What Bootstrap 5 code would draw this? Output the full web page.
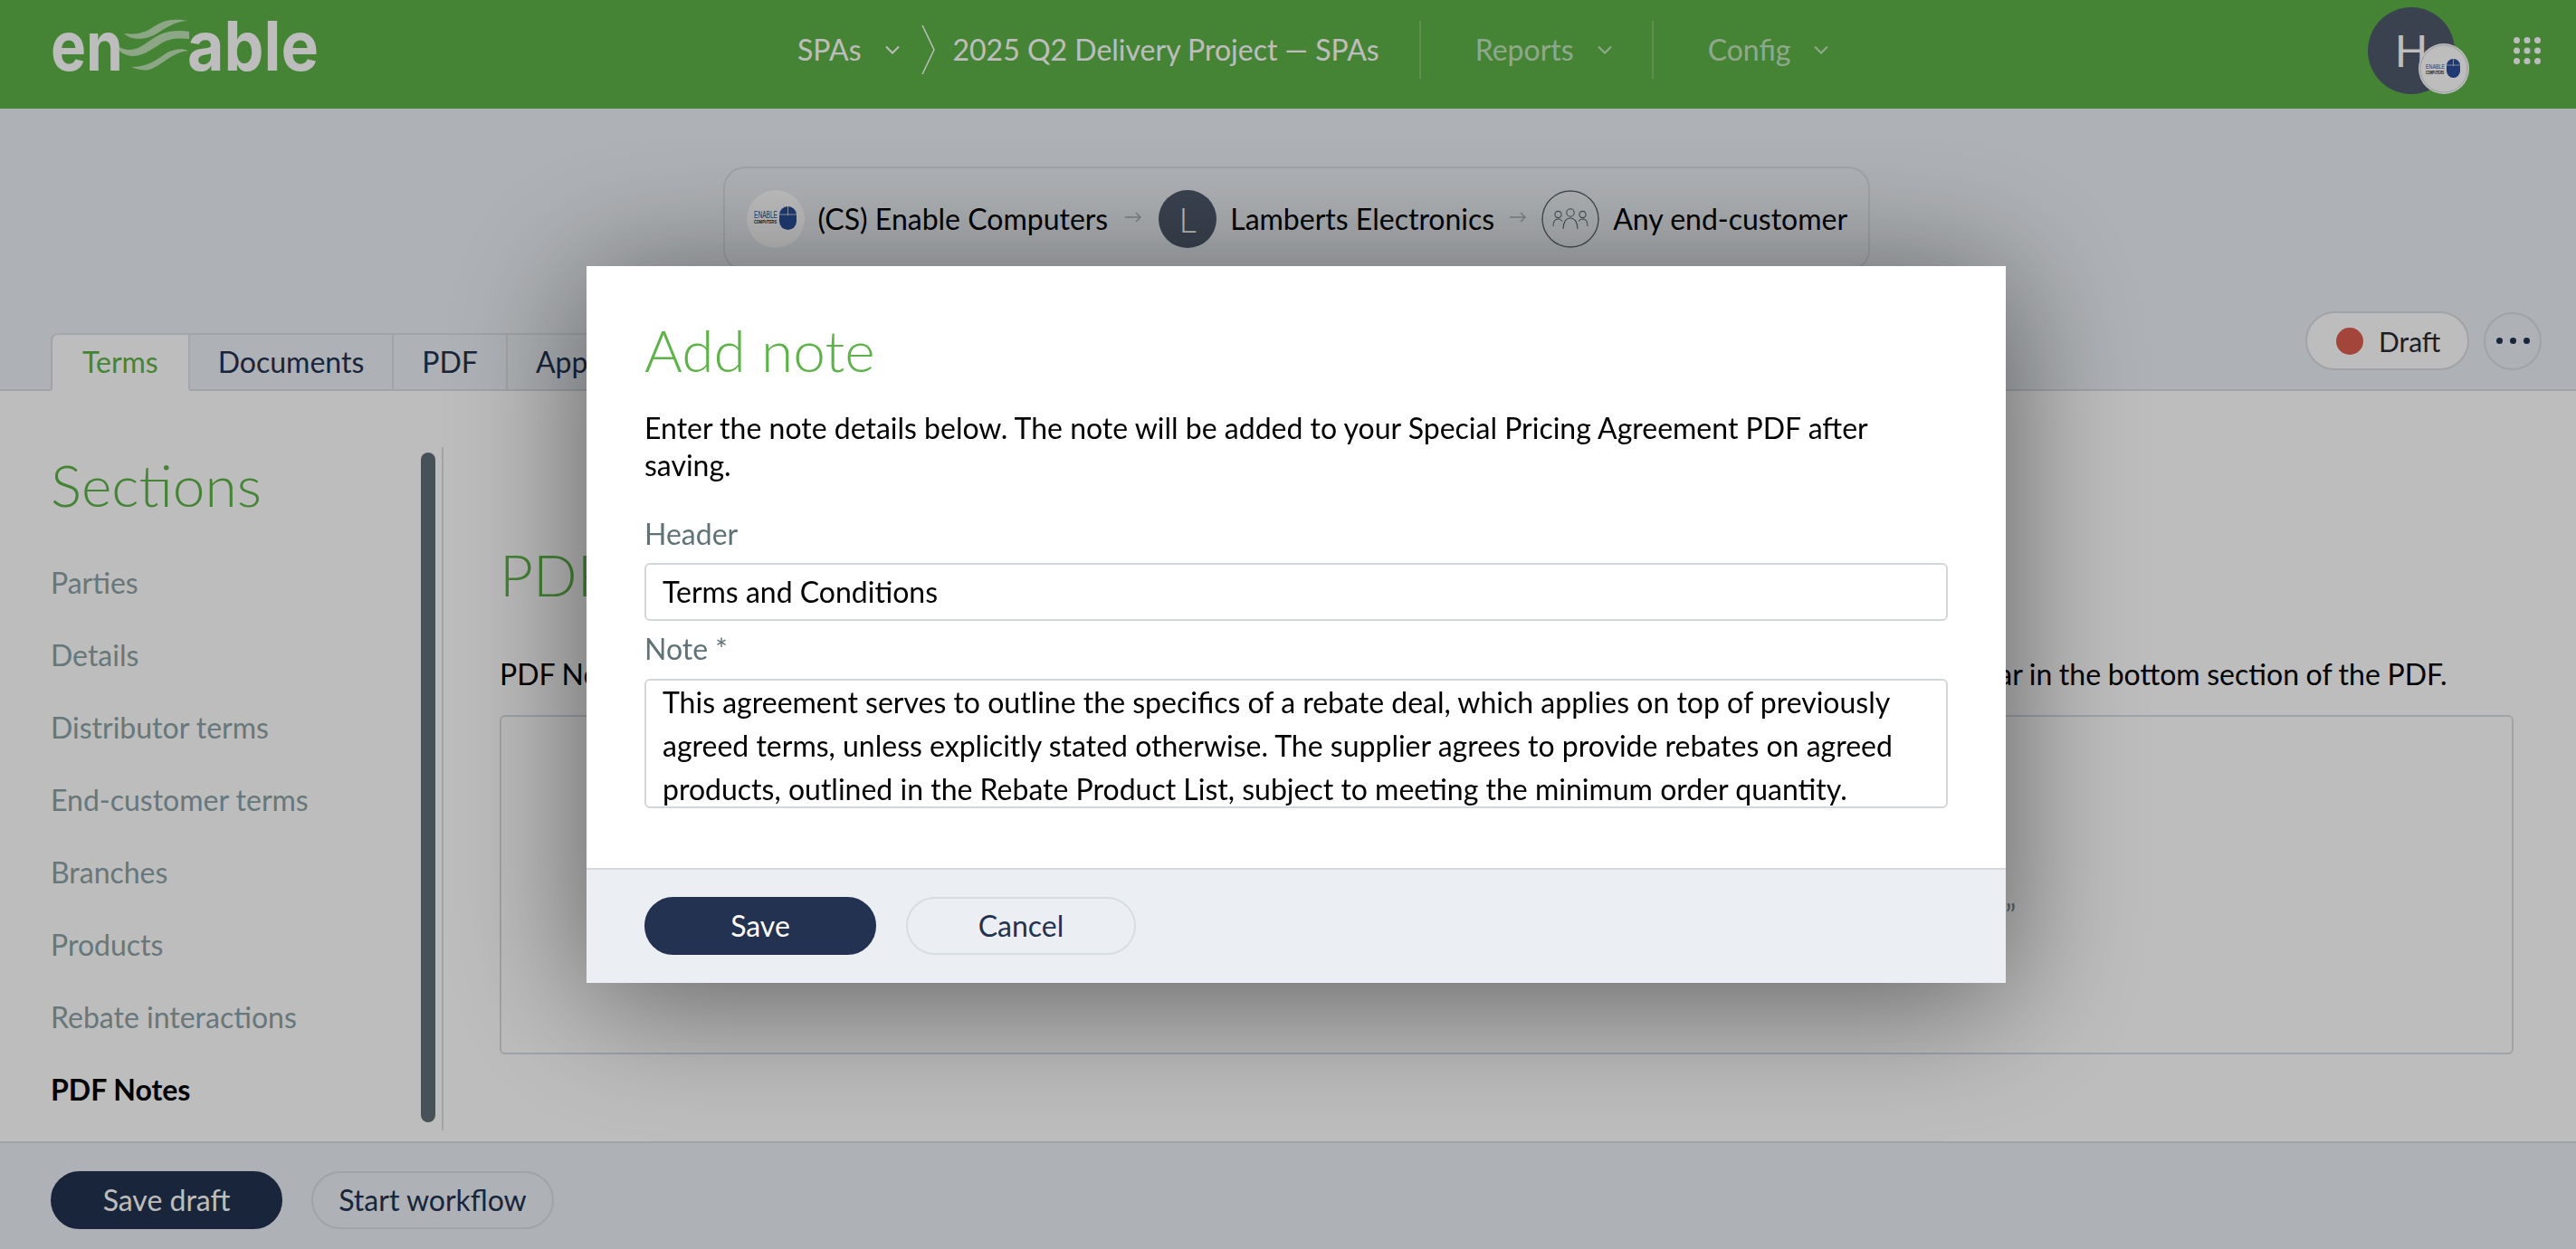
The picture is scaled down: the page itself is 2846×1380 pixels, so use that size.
<!doctype html>
<html lang="en"><head><meta charset="utf-8"><title>Add note</title>
<link href="https://cdn.jsdelivr.net/npm/bootstrap@5.3.0/dist/css/bootstrap.min.css" rel="stylesheet">
<style>
html,body{height:100%}
body{font-family:"Lato","Liberation Sans",sans-serif;font-size:32px;line-height:48px;color:#000;background:#fff;overflow:hidden}
.topbar{height:120px;background:#5db348;padding:0 39px 0 56px;flex:none}
.brandlogo{width:296px;height:58px;display:block;margin-bottom:22px;overflow:visible;flex:none}
.topnav{margin-left:529px;color:#fff;height:120px;padding-bottom:10px}
.topnav .dimmed{color:rgba(255,255,255,.65)}
.chev{width:18px;height:10px;display:block;margin-left:25px}
.bigchev{width:15px;height:54px;display:block;margin:0 20px 0 23px}
.navsep{width:2px;height:64px;background:rgba(255,255,255,.2)}
.sep1{margin:0 60px 0 44px}
.sep2{margin:0 60px 0 43px}
.avatarwrap{position:relative;width:96px;height:96px;margin-bottom:8px;margin-right:65px}
.avatar{width:96px;height:96px;background:#4f5a6c;color:#fff;font-size:48px;font-weight:400;line-height:96px;text-align:center;border-radius:50%}
.avatarbadge{position:absolute;left:56px;top:40px;width:56px;height:56px}
.appgrid{width:30px;height:30px;margin-bottom:8px;display:block}
.subhead{height:312px;background:#ebeff4;border-bottom:2px solid #d8dde1;flex:none;padding-top:64px}
.partybar{width:1267px;height:116px;margin:0 auto;position:relative;left:9px;border:2px solid #d8dde1;border-radius:24px;padding:0 24px;white-space:nowrap}
.partycircle{width:64px;height:64px;border-radius:50%;flex:none;display:block}
.circletext{background:#4f5a6c;color:#fff;font-size:38px;font-weight:300;line-height:64px;text-align:center}
.partyname{margin-left:15px;flex:none}
.partyarrow{width:18px;height:12px;margin:-4px 17px 0;flex:none;display:block}
.firstarrow{margin-left:19px;margin-right:19px}
.tabrow{margin-top:44px;height:88px;padding:0 38px 0 56px}
.tabset{margin-top:24px;height:64px;flex-wrap:nowrap;border:0}
.tabset .nav-link{height:64px;padding:0 31px;color:#233250;line-height:60px;border:2px solid #d8dde1;border-bottom:2px solid #d8dde1;border-left:0;border-radius:0;margin:0;font-size:32px}
.tabset .nav-link.active{color:#5db348;background:#fff;border-left:2px solid #d8dde1;border-bottom-color:#fff;border-radius:8px 0 0 0;padding:0 33px}
.statuspill{height:65px;width:181px;background:#fff;border:2px solid #d8dde1;border-radius:33px;padding-left:32px;color:#262b37;font-size:30px}
.statusdot{width:30px;height:30px;background:#de5d52;border-radius:50%;margin-right:17px;flex:none}
.morebtn{width:64px;height:64px;border:2px solid #d8dde1;border-radius:50%;margin-left:16px;background:transparent;padding:0}
.moredot{width:7px;height:7px;background:#233250;border-radius:50%}
.workspace{min-height:0;flex:1 1 auto;background:#fff}
.sidepane{width:490px;flex:none;margin:62px 0 12px;border-right:2px solid #d8dde1;padding:0 7px 0 56px}
.sidelist{flex:1 1 auto;min-width:0}
.sidetitle{font-size:64px;font-weight:300;line-height:80px;color:#5db348;margin:0 0 28px;padding-top:2px}
.sidelink{display:block;height:80px;line-height:80px;color:#8ba1a5;text-decoration:none}
.sidelink.current{color:#000;font-weight:700}
.thumbbar{width:16px;background:#5f6f76;border-radius:8px;margin:6px 0 9px;flex:none}
.pagebody{padding:0 69px 0 62px;min-width:0}
.pagetitle{font-size:64px;font-weight:300;line-height:80px;color:#5db348;margin:163px 0 0}
.pagelead{margin:46px 0 0;white-space:nowrap;word-spacing:-.6px}
.emptybox{margin-top:21px;height:375px;border:2px solid #d8dde1;border-radius:6px;padding-top:66px;color:#7c8f93;white-space:nowrap;word-spacing:.5px}
.bottombar{height:119px;flex:none;background:#ebeff4;border-top:2px solid #d8dde1;padding:31px 0 0 56px;gap:32px}
.pillbtn{height:64px;width:256px;border-radius:32px;font-size:32px;line-height:60px;padding:0;font-family:inherit;border:2px solid transparent}
.pillnavy{background:#233250;color:#fff;border-color:#233250}
.pillnavy:hover{background:#233250;color:#fff;border-color:#233250}
.pillghost{background:transparent;color:#233250;border-color:#d8dde1}
.wide300{width:268px}
.shade{--bs-backdrop-opacity:.26;--bs-backdrop-bg:#000;position:fixed;inset:0;width:100%;height:100%;z-index:1050}
.notedialog{--bs-modal-width:1568px;max-width:1568px;width:1568px;margin:294px 0 0 648px;pointer-events:auto}
.notecard{border:0;border-radius:0;box-shadow:0 16px 140px rgba(0,0,0,.5);background:#fff}
.notebody{padding:0 64px;height:665px}
.notetitle{font-size:64px;font-weight:300;line-height:80px;color:#5db348;margin:0;padding-top:53px;height:134px}
.notelead{margin:24px 0 0;line-height:41px}
.fieldlabel{display:block;margin:0;color:#5f7377;line-height:48px}
.lab1{margin-top:32px}
.lab2{margin-top:7px}
.fieldbox{display:block;width:100%;border:2px solid #d3d7da;border-radius:6px;background:#fff;color:#000;font-size:32px;font-family:inherit;line-height:48px;padding:5px 18px 7px;height:64px;box-shadow:none;margin-top:8px}
.fieldarea{height:143px;padding:0 18px;overflow:hidden;resize:none;margin-top:9px}
.notefoot{height:127px;background:#ebeef3;border-top:2px solid #d5d9dc;padding:30px 64px 0;margin:0;border-radius:0}
.notefoot>.pillbtn{width:256px;margin:0}
.notefoot>.pillghost{width:254px;margin:0 0 0 33px}
</style></head>
<body class="d-flex flex-column">

<nav class="topbar d-flex align-items-center">
  <svg class="brandlogo" viewBox="0 0 296 58" role="img" aria-label="enable">
    <text x="0" y="58" font-family="Inter" font-weight="700" font-size="76" fill="#fff" textLength="80" lengthAdjust="spacingAndGlyphs">en</text>
    <text x="151" y="58" font-family="Inter" font-weight="700" font-size="76" fill="#fff" textLength="145" lengthAdjust="spacingAndGlyphs">able</text>
    <g fill="#fff" fill-opacity=".6">
      <path d="M81 17C90 18 100 18 110 12C120 5 130-1 152 3C140 3 132 8 122 14C110 23 92 27 81 17Z"/>
      <path d="M71 30C78 33 82 35 87 35C100 35 108 24 121 18C130 14 142 13 153 15L153 23C140 22 132 22 122 28C108 37 100 42 91 42C82 42 75 37 71 30Z"/>
      <path d="M89 54C96 54 101 53 107 51C118 47 124 40 131 37C138 34 146 33 152 36C143 37 138 40 131 44C122 50 112 58 104 57.500C98 57 93 56 89 54Z"/>
    </g>
  </svg>
  <div class="topnav d-flex align-items-center">
    <span>SPAs</span>
    <svg class="chev" viewBox="0 0 18 10"><path d="M2 1.500l7 7 7-7" fill="none" stroke="#fff" stroke-width="2"/></svg>
    <svg class="bigchev" viewBox="0 0 15 54"><path d="M1 0l13 27L1 54" fill="none" stroke="#fff" stroke-width="1.500"/></svg>
    <span>2025 Q2 Delivery Project — SPAs</span>
    <span class="navsep sep1"></span>
    <span class="dimmed">Reports</span>
    <svg class="chev" viewBox="0 0 18 10"><path d="M2 1.500l7 7 7-7" fill="none" stroke="rgba(255,255,255,.65)" stroke-width="2"/></svg>
    <span class="navsep sep2"></span>
    <span class="dimmed">Config</span>
    <svg class="chev" viewBox="0 0 18 10"><path d="M2 1.500l7 7 7-7" fill="none" stroke="rgba(255,255,255,.65)" stroke-width="2"/></svg>
  </div>
  <div class="avatarwrap ms-auto">
    <div class="avatar">H</div>
    <svg class="avatarbadge" viewBox="0 0 56 56">
      <circle cx="28" cy="28" r="28" fill="#fff"/><circle cx="28" cy="28" r="26" fill="none" stroke="#c4c8cc" stroke-width=".8"/>
      <text x="8" y="28" font-family="Liberation Sans" font-size="8" fill="#2b4f9a" textLength="21" lengthAdjust="spacingAndGlyphs">ENABLE</text>
      <text x="8" y="34" font-family="Liberation Sans" font-weight="700" font-size="5" fill="#222" textLength="20" lengthAdjust="spacingAndGlyphs">COMPUTERS</text>
      <rect x="31" y="17" width="15" height="21" rx="7.500" fill="#2b4f9a"/><path d="M38.500 17v8M31 24h15" stroke="#fff" stroke-width=".6"/>
    </svg>
  </div>
  <svg class="appgrid" viewBox="0 0 30 30" fill="#fff"><circle cx="3.500" cy="3.500" r="3.500"/><circle cx="15" cy="3.500" r="3.500"/><circle cx="26.500" cy="3.500" r="3.500"/><circle cx="3.500" cy="15" r="3.500"/><circle cx="15" cy="15" r="3.500"/><circle cx="26.500" cy="15" r="3.500"/><circle cx="3.500" cy="26.500" r="3.500"/><circle cx="15" cy="26.500" r="3.500"/><circle cx="26.500" cy="26.500" r="3.500"/></svg>
</nav>

<header class="subhead">
  <div class="partybar d-flex align-items-center">
    <svg class="partycircle" viewBox="0 0 64 64">
      <circle cx="32" cy="32" r="32" fill="#fff"/>
      <text x="8" y="31" font-family="Liberation Sans" font-size="10" fill="#2b4f9a" textLength="26" lengthAdjust="spacingAndGlyphs">ENABLE</text>
      <text x="8" y="37" font-family="Liberation Sans" font-weight="700" font-size="5.500" fill="#222" textLength="25" lengthAdjust="spacingAndGlyphs">COMPUTERS</text>
      <rect x="36" y="18" width="19" height="26" rx="9.500" fill="#2b4f9a"/><path d="M45.500 18v10M36 27h19" stroke="#fff" stroke-width=".7"/>
    </svg>
    <span class="partyname">(CS) Enable Computers</span>
    <svg class="partyarrow firstarrow" viewBox="0 0 18 12"><path d="M0 6h17M12 1l5 5-5 5" fill="none" stroke="#a9adb0" stroke-width="1.500"/></svg>
    <span class="partycircle circletext">L</span>
    <span class="partyname">Lamberts Electronics</span>
    <svg class="partyarrow" viewBox="0 0 18 12"><path d="M0 6h17M12 1l5 5-5 5" fill="none" stroke="#a9adb0" stroke-width="1.500"/></svg>
    <svg class="partycircle" viewBox="0 0 64 64">
      <circle cx="32" cy="32" r="31" fill="none" stroke="#5b676b" stroke-width="1.500"/>
      <g fill="none" stroke="#5b676b" stroke-width="1.100">
        <circle cx="18.500" cy="27" r="3.600"/><circle cx="32" cy="25" r="4.200"/><circle cx="45.500" cy="27" r="3.600"/>
        <path d="M13 40c0-5 2-8 5.500-8 2 0 3.500 1 4.500 2.500M51 40c0-5-2-8-5.500-8-2 0-3.500 1-4.500 2.500M24 43c0-7 3-12 8-12s8 5 8 12"/>
      </g>
    </svg>
    <span class="partyname">Any end-customer</span>
  </div>
  <div class="tabrow d-flex justify-content-between align-items-start">
    <ul class="nav nav-tabs tabset">
      <li class="nav-item"><a class="nav-link active" href="#">Terms</a></li>
      <li class="nav-item"><a class="nav-link" href="#">Documents</a></li>
      <li class="nav-item"><a class="nav-link" href="#">PDF</a></li>
      <li class="nav-item"><a class="nav-link" href="#">Approvals</a></li>
    </ul>
    <div class="d-flex align-items-center">
      <div class="statuspill d-flex align-items-center"><span class="statusdot"></span>Draft</div>
      <button class="morebtn d-flex align-items-center justify-content-center gap-2" type="button" aria-label="More"><span class="moredot"></span><span class="moredot"></span><span class="moredot"></span></button>
    </div>
  </div>
</header>

<main class="workspace d-flex">
  <aside class="sidepane d-flex">
    <div class="sidelist">
      <h2 class="sidetitle">Sections</h2>
      <a class="sidelink" href="#">Parties</a>
      <a class="sidelink" href="#">Details</a>
      <a class="sidelink" href="#">Distributor terms</a>
      <a class="sidelink" href="#">End-customer terms</a>
      <a class="sidelink" href="#">Branches</a>
      <a class="sidelink" href="#">Products</a>
      <a class="sidelink" href="#">Rebate interactions</a>
      <a class="sidelink current" href="#">PDF Notes</a>
    </div>
    <div class="thumbbar"></div>
  </aside>
  <section class="pagebody flex-grow-1">
    <h2 class="pagetitle">PDF Notes</h2>
    <p class="pagelead">PDF Notes are terms and conditions that you can add to the Special Pricing Agreement. Any notes added here will appear in the bottom section of the PDF.</p>
    <div class="emptybox d-flex align-items-center justify-content-center">There are no notes yet. Click the button below to create a note using “Add note”</div>
  </section>
</main>

<footer class="bottombar d-flex">
  <button class="btn pillbtn pillnavy" type="button">Save draft</button>
  <button class="btn pillghost pillbtn wide300" type="button">Start workflow</button>
</footer>

<div class="shade modal-backdrop show"></div>
<div class="modal d-block overflow-hidden" tabindex="-1">
  <div class="modal-dialog notedialog">
    <div class="modal-content notecard">
      <div class="modal-body notebody">
        <h1 class="notetitle">Add note</h1>
        <p class="notelead">Enter the note details below. The note will be added to your Special Pricing Agreement PDF after saving.</p>
        <label class="fieldlabel lab1" for="hdr">Header</label>
        <input id="hdr" class="form-control fieldbox" value="Terms and Conditions">
        <label class="fieldlabel lab2" for="nt">Note *</label>
        <textarea id="nt" class="form-control fieldbox fieldarea">This agreement serves to outline the specifics of a rebate deal, which applies on top of previously agreed terms, unless explicitly stated otherwise. The supplier agrees to provide rebates on agreed products, outlined in the Rebate Product List, subject to meeting the minimum order quantity.</textarea>
      </div>
      <div class="modal-footer notefoot justify-content-start d-flex align-items-start">
        <button class="btn pillbtn pillnavy" type="button">Save</button>
        <button class="btn pillbtn pillghost" type="button">Cancel</button>
      </div>
    </div>
  </div>
</div>
<script src="https://cdn.jsdelivr.net/npm/bootstrap@5.3.0/dist/js/bootstrap.bundle.min.js"></script>
</body></html>
